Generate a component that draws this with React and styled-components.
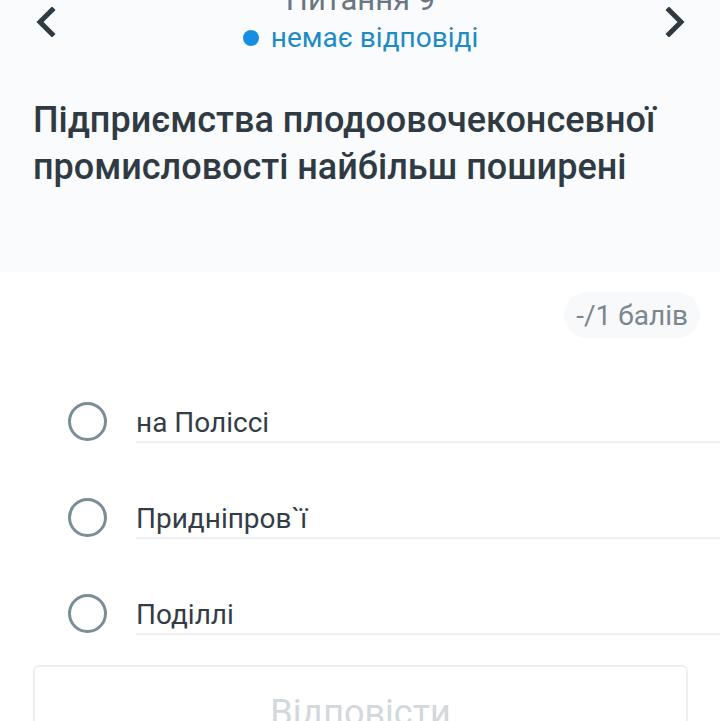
import styled, { createGlobalStyle } from 'styled-components';

const GlobalStyle = createGlobalStyle`
  html, body {
    margin: 0;
    padding: 0;
    background: #ffffff;
    font-family: Roboto, 'Noto Sans', sans-serif;
    overflow: hidden;
  }
`;

const Page = styled('div')`
  width: 720px;
  height: 721px;
  overflow: hidden;
  background: #ffffff;
`;

const Header = styled('header')`
  height: 272px;
  box-sizing: border-box;
  background: #f9fbfd;
`;

const Nav = styled('div')`
  display: flex;
  justify-content: space-between;
  align-items: flex-start;
  height: 60px;
  padding: 0 33px 0 34px;
`;

const NavButton = styled('button')`
  border: none;
  background: none;
  padding: 0;
  margin-top: 6px;
  width: 24px;
  height: 32px;
  display: flex;
  align-items: center;
  justify-content: center;
  color: #2f3a43;
  cursor: pointer;
`;

const Center = styled('div')`
  display: flex;
  flex-direction: column;
  align-items: center;
`;

const QuestionNumber = styled('div')`
  font-size: 31px;
  line-height: 34px;
  margin-top: -17px;
  color: #6a7680;
`;

const Status = styled('div')`
  display: flex;
  align-items: center;
  gap: 12px;
  margin-top: 4px;
  font-size: 28px;
  line-height: 34px;
  color: #1f8bc4;
`;

const Dot = styled('span')`
  width: 16px;
  height: 16px;
  border-radius: 50%;
  background: #168fe3;
`;

const Question = styled('h1')`
  margin: 37px 0 0;
  padding: 0 33px;
  font-size: 36px;
  line-height: 47px;
  font-weight: 500;
  color: #2f3a43;
`;

const Body = styled('main')`
  display: flex;
  flex-direction: column;
`;

const PointsRow = styled('div')`
  display: flex;
  justify-content: flex-end;
  padding: 20px 20px 0;
`;

const Points = styled('span')`
  height: 46px;
  display: flex;
  align-items: center;
  padding: 0 12px;
  border-radius: 23px;
  background: #f7f9fa;
  color: #7b868f;
  font-size: 28px;
`;

const Options = styled('ul')`
  list-style: none;
  margin: 61px 0 0;
  padding: 0 0 0 68px;
  display: flex;
  flex-direction: column;
  gap: 52px;
`;

const Option = styled('li')`
  display: flex;
  align-items: center;
  gap: 29px;
`;

const Radio = styled('span')`
  flex: none;
  width: 39px;
  height: 39px;
  box-sizing: border-box;
  border-radius: 50%;
  border: 3.5px solid #7a8d97;
`;

const Label = styled('span')`
  flex: 1;
  height: 44px;
  box-sizing: border-box;
  padding-top: 4px;
  display: flex;
  align-items: center;
  border-bottom: 2px solid #eef0f2;
  font-size: 28px;
  color: #333d46;
`;

const SubmitButton = styled('button')`
  margin: 30px 32px 0 33px;
  height: 90px;
  border: 2px solid #eceef0;
  border-radius: 6px;
  background: #ffffff;
  font-family: Roboto, 'Noto Sans', sans-serif;
  font-size: 36px;
  color: #d3d8dc;
  padding-top: 6px;
`;

const Chevron = ({ dir }) => (
  <svg width="22" height="30" viewBox="0 0 22 30" fill="none">
    <path
      d={dir === 'left' ? 'M17 3 L5 15 L17 27' : 'M5 3 L17 15 L5 27'}
      stroke="currentColor"
      strokeWidth="5"
      strokeLinecap="square"
    />
  </svg>
);

const answers = ['на Поліссі', 'Придніпров`ї', 'Поділлі'];

export default function App() {
  return (
    <Page>
      <GlobalStyle />
      <Header>
        <Nav>
          <NavButton aria-label="Попереднє">
            <Chevron dir="left" />
          </NavButton>
          <Center>
            <QuestionNumber>Питання 9</QuestionNumber>
            <Status>
              <Dot />
              немає відповіді
            </Status>
          </Center>
          <NavButton aria-label="Наступне">
            <Chevron dir="right" />
          </NavButton>
        </Nav>
        <Question>Підприємства плодоовочеконсевної промисловості найбільш поширені</Question>
      </Header>
      <Body>
        <PointsRow>
          <Points>-/1 балів</Points>
        </PointsRow>
        <Options>
          {answers.map((a) => (
            <Option key={a}>
              <Radio />
              <Label>{a}</Label>
            </Option>
          ))}
        </Options>
        <SubmitButton>Відповісти</SubmitButton>
      </Body>
    </Page>
  );
}
